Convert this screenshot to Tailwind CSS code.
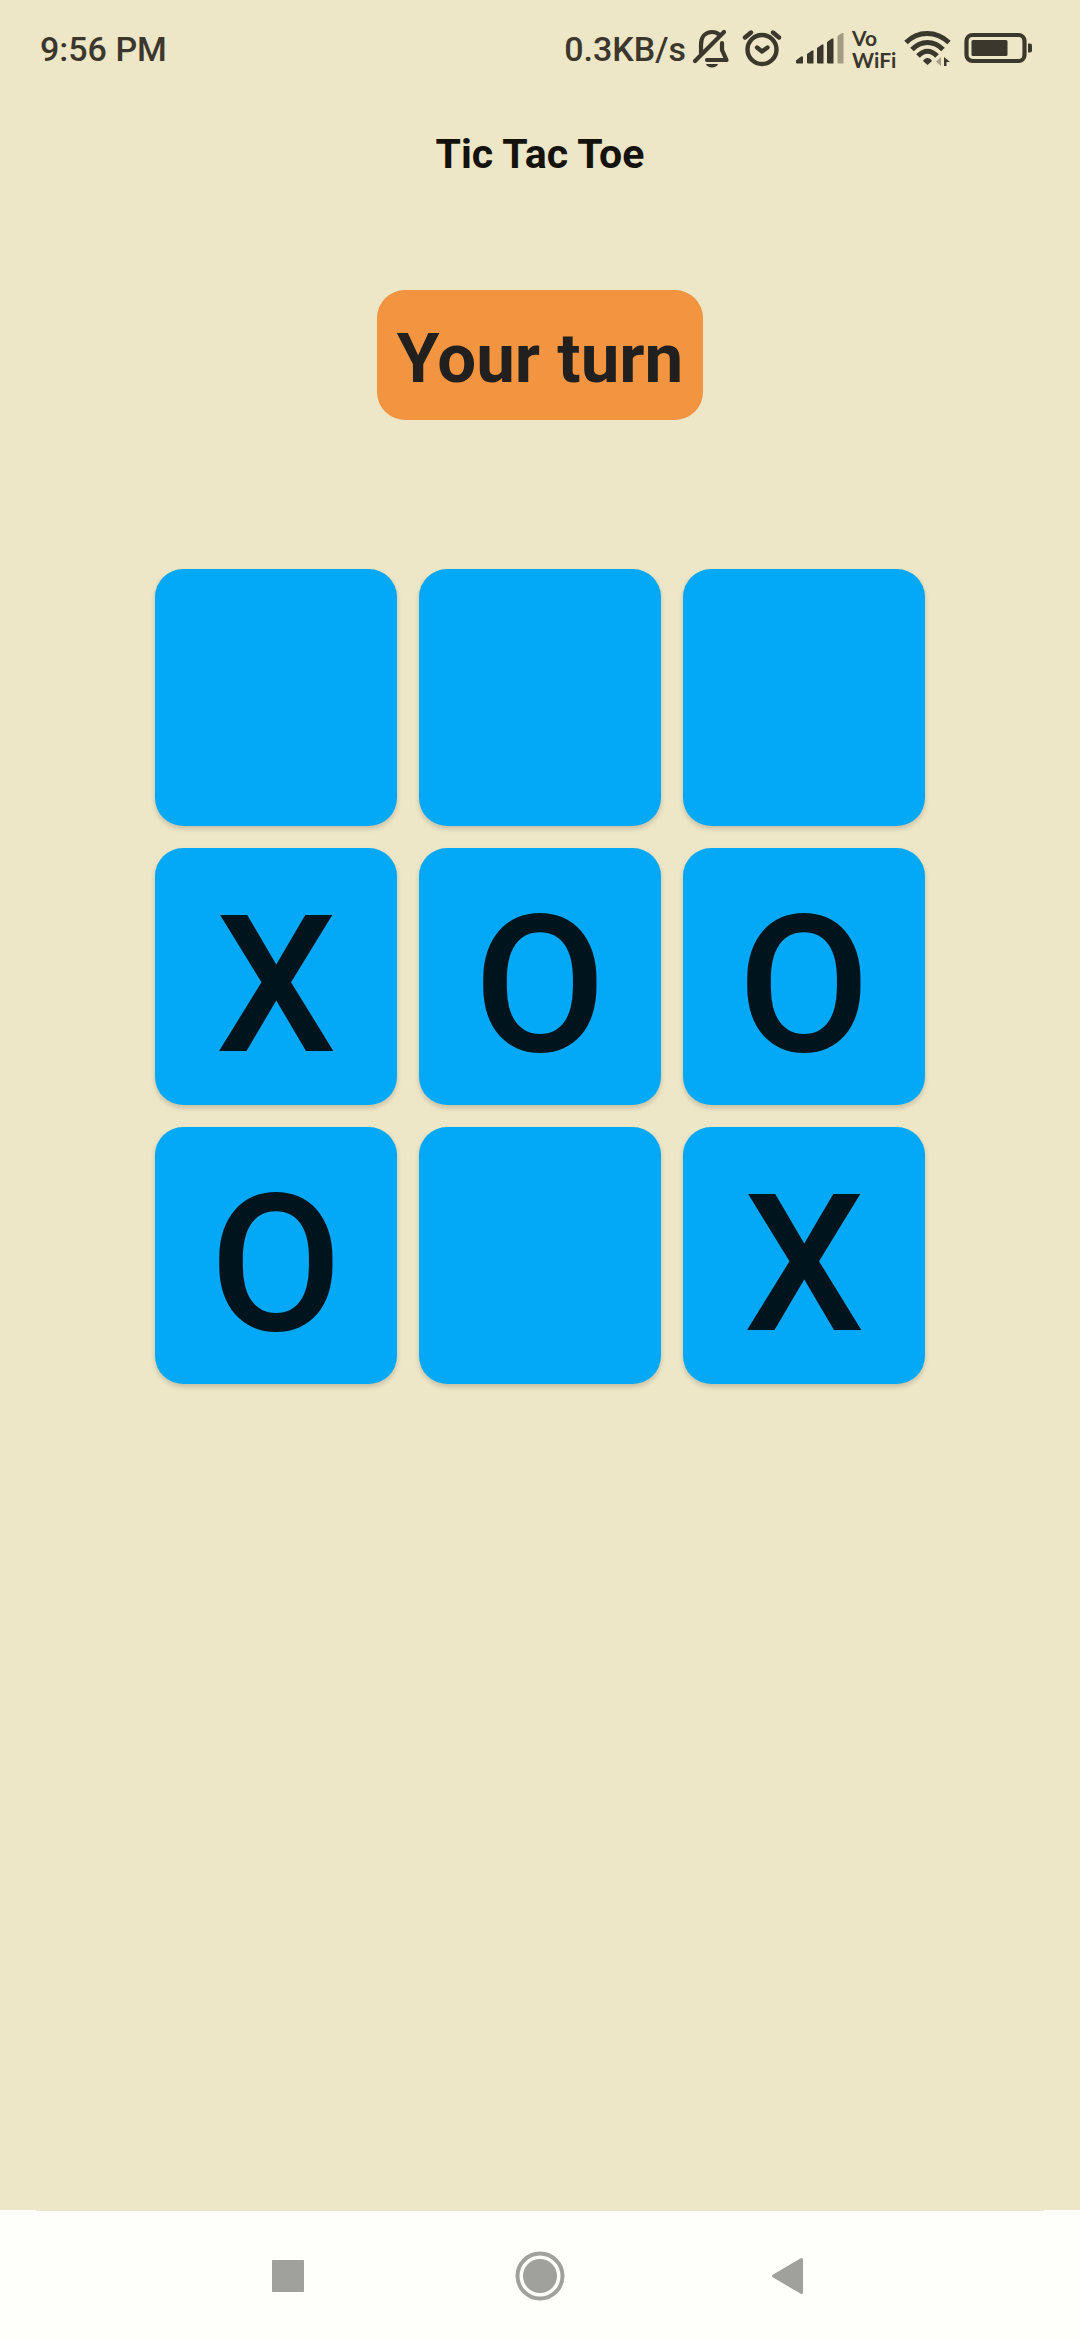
<!DOCTYPE html>
<html lang="en">
<head>
<meta charset="utf-8">
<meta name="viewport" content="width=device-width, initial-scale=1">
<title>Tic Tac Toe</title>
<script src="https://cdn.jsdelivr.net/npm/@tailwindcss/browser@4"></script>
</head>
<body class="flex min-h-screen flex-col bg-[#ede6c7] font-['Roboto',sans-serif]">

<!-- Status bar -->
<div class="flex h-[98px] items-center justify-between pl-10 pr-12 text-[34px] font-medium text-[#3b372c]">
  <time class="leading-10">9:56 PM</time>
  <div class="flex items-center gap-2">
    <span class="leading-10">0.3KB/s</span>
    <svg class="-ml-0.5 h-10 w-10" viewBox="0 0 40 40" fill="none" stroke="currentColor" stroke-width="4.200" stroke-linecap="round" stroke-linejoin="round" aria-label="Silent">
      <path d="M9 24V16C9 7 14 3 20 3C23 3 25.500 4 27 5.500M30 14V21L34.500 31H15M3 32L32 3"/>
      <path d="M14 35H26C25 39.500 15 39.500 14 35Z" fill="currentColor" stroke="none"/>
    </svg>
    <svg class="ml-0.5 h-10 w-10" viewBox="0 0 40 40" fill="none" stroke="currentColor" stroke-width="4.400" stroke-linecap="round" stroke-linejoin="round" aria-label="Alarm">
      <circle cx="20" cy="20.500" r="14.500"/>
      <path d="M15 18.500L20 22.500L25.500 18.500M3 8.500L9 3.500M31 3.500L37 8.500"/>
    </svg>
    <svg class="ml-1.5 h-10 w-12" viewBox="0 0 48 40" fill="currentColor" aria-label="Signal">
      <path d="M0 34V31.500L5 27.500H7V34.500H1ZM11 34V25L16 21.500H17.500V34.500H12ZM21 34V19L26 15.500H27.500V34.500H22ZM31 34V13L36 9.500H37.500V34.500H32Z"/>
      <path d="M41.500 34V7L46 4H47.500V34.500H42Z" opacity=".42"/>
    </svg>
    <span class="flex w-11 flex-col font-['Lato',sans-serif] text-[21px] leading-[22px] font-bold"><span>Vo</span><span>WiFi</span></span>
    <svg class="h-10 w-12" viewBox="0 0 48 40" fill="none" stroke="currentColor" stroke-width="5" aria-label="Wi-Fi">
      <path d="M2 13.500C14 1.500 32 1.500 45 13.500M8 20.500C17 11 30 11 39 20.500M14 27C20 20.500 27 20.500 33 27"/>
      <path d="M19 32C21 28 26 28 28 32L23.500 36Z" fill="currentColor" stroke="none"/>
      <path d="M32 32.500L37 28V37Z" fill="currentColor" stroke="none" opacity=".4"/>
      <path d="M40 37V28L46 33H42.500V37Z" fill="currentColor" stroke="none"/>
    </svg>
    <svg class="ml-1 h-10 w-[68px]" viewBox="0 0 68 40" fill="none" aria-label="Battery">
      <rect x="2.500" y="6" width="58" height="26" rx="6" stroke="currentColor" stroke-width="4.200"/>
      <rect x="7.500" y="11" width="36" height="16" rx="1.500" fill="currentColor"/>
      <path d="M64 14.500H66Q68 14.500 68 16.500V21.500Q68 23.500 66 23.500H64Z" fill="currentColor"/>
    </svg>
  </div>
</div>

<main class="flex grow flex-col items-center px-4">
  <h1 class="mt-[30px] text-[41px] leading-[52px] font-bold text-[#14120c]">Tic Tac Toe</h1>
  <p class="mt-[110px] rounded-[28px] bg-[#f29440] px-5 pt-[26px] pb-[18px] text-[69px] leading-[86px] font-bold text-[#21201e]" role="status">Your turn</p>

  <div class="mt-[149px] grid w-full max-w-[770px] grid-cols-3 gap-[22px] text-[192px] leading-none font-medium text-[#00141e]">
    <button type="button" aria-label="Row 1, column 1" class="h-[257px] rounded-[28px] bg-[#03a9f6] shadow-[0_3px_5px_rgba(0,0,0,0.16)]"></button>
    <button type="button" aria-label="Row 1, column 2" class="h-[257px] rounded-[28px] bg-[#03a9f6] shadow-[0_3px_5px_rgba(0,0,0,0.16)]"></button>
    <button type="button" aria-label="Row 1, column 3" class="h-[257px] rounded-[28px] bg-[#03a9f6] shadow-[0_3px_5px_rgba(0,0,0,0.16)]"></button>
    <button type="button" class="h-[257px] rounded-[28px] bg-[#03a9f6] pt-[18px] shadow-[0_3px_5px_rgba(0,0,0,0.16)]">X</button>
    <button type="button" class="h-[257px] rounded-[28px] bg-[#03a9f6] pt-[18px] shadow-[0_3px_5px_rgba(0,0,0,0.16)]">O</button>
    <button type="button" class="h-[257px] rounded-[28px] bg-[#03a9f6] pt-[18px] shadow-[0_3px_5px_rgba(0,0,0,0.16)]">O</button>
    <button type="button" class="h-[257px] rounded-[28px] bg-[#03a9f6] pt-[18px] shadow-[0_3px_5px_rgba(0,0,0,0.16)]">O</button>
    <button type="button" aria-label="Row 3, column 2" class="h-[257px] rounded-[28px] bg-[#03a9f6] shadow-[0_3px_5px_rgba(0,0,0,0.16)]"></button>
    <button type="button" class="h-[257px] rounded-[28px] bg-[#03a9f6] pt-[18px] shadow-[0_3px_5px_rgba(0,0,0,0.16)]">X</button>
  </div>
</main>

<!-- System navigation -->
<nav class="bg-[#fefffa] text-[#a0a09d]">
  <div class="mx-9 h-px bg-[#ece4d0]"></div>
  <div class="flex h-[129px] justify-center">
    <button type="button" aria-label="Recent apps" class="flex w-[252px] items-center justify-center">
      <svg class="size-12" viewBox="0 0 48 48" fill="currentColor"><rect x="8" y="8" width="32" height="32" rx="1"/></svg>
    </button>
    <button type="button" aria-label="Home" class="flex w-[252px] items-center justify-center">
      <svg class="size-[50px]" viewBox="0 0 50 50"><circle cx="25" cy="25" r="22.500" fill="none" stroke="currentColor" stroke-width="4"/><circle cx="25" cy="25" r="17" fill="currentColor"/></svg>
    </button>
    <button type="button" aria-label="Back" class="flex w-[252px] items-center justify-center">
      <svg class="size-12" viewBox="0 0 48 48" fill="currentColor" stroke="currentColor" stroke-width="3" stroke-linejoin="round"><path d="M5.500 24L33.500 7.500V40.500Z"/></svg>
    </button>
  </div>
</nav>
</body>
</html>
